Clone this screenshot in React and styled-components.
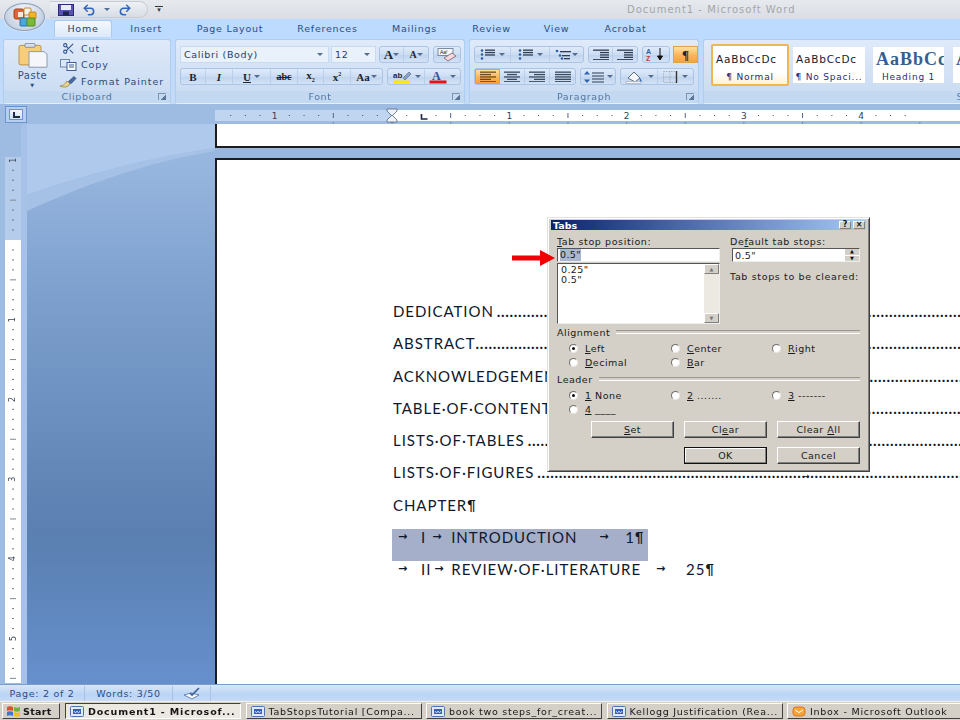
import React from 'react'
import styled, { createGlobalStyle } from 'styled-components'
import { Scissors, Undo2, Redo2 } from 'lucide-react'

const GlobalStyle = createGlobalStyle`
  html, body { margin: 0; padding: 0; background: #fff; overflow: hidden; }
  * { box-sizing: border-box; }
`

const uiFont = `"DejaVu Sans", "Liberation Sans", sans-serif`

const App_ = styled.div`
  position: relative;
  width: 960px;
  height: 720px;
  overflow: hidden;
  display: flex;
  flex-direction: column;
  font-family: ${uiFont};
  filter: blur(0.35px);
`

/* title bar */
const TitleBar = styled.div`
  height: 19px;
  flex: none;
  display: flex;
  align-items: center;
  background: linear-gradient(#e6e9ee, #dadee4);
`
const QuickAccess = styled.div`
  width: 98px;
  height: 17px;
  margin-left: 50px;
  padding-left: 8px;
  display: flex;
  align-items: center;
  gap: 8px;
  border-radius: 0 9px 9px 0;
  border: 1px solid #c6ccd6;
  border-left: 0;
  background: linear-gradient(#eef1f5, #d8dde5);
`
const QuickCaret = styled.div`
  margin-left: 7px;
  width: 8px;
  color: #334;
  font-size: 7px;
  line-height: 7px;
  text-align: center;
  border-top: 1px solid #334;
`
const WindowTitle = styled.div`
  margin-left: 464px;
  font-size: 10px;
  letter-spacing: 1px;
  color: #a3a6aa;
  white-space: nowrap;
`

/* tabs */
const TabRow = styled.div`
  height: 18px;
  flex: none;
  display: flex;
  align-items: flex-end;
  padding-left: 54px;
  background: #bddaff;
`
const RibbonTab = styled.div`
  width: ${(p) => p.$w}px;
  height: ${(p) => (p.$active ? 17 : 16)}px;
  line-height: 16px;
  text-align: center;
  font-size: 9.5px;
  letter-spacing: 0.75px;
  color: #2c4f85;
  white-space: nowrap;
  flex: none;
  ${(p) => p.$active && `
    background: linear-gradient(#f2f8ff, #dce9f9);
    border: 1px solid #a9c9ee;
    border-bottom: 0;
    border-radius: 3px 3px 0 0;
    color: #23416f;
  `}
`

/* office orb */
const Orb = styled.div`
  position: absolute;
  left: 4px;
  top: 3px;
  width: 41px;
  height: 28px;
  border-radius: 50%;
  display: flex;
  align-items: center;
  justify-content: center;
  background: radial-gradient(circle at 50% 30%, #f7f8fa 0, #c7d3e3 70%, #97a8bf 100%);
  border: 1px solid #8fa0b8;
  box-shadow: 0 0 0 1px #dbe6f5;
`

/* ribbon */
const Ribbon = styled.div`
  height: 67px;
  flex: none;
  display: flex;
  gap: 4px;
  padding: 2px 0 0 3px;
  background: linear-gradient(#bddaff, #c4dbf7);
  overflow: hidden;
`
const Group = styled.div`
  width: ${(p) => p.$w}px;
  flex: none;
  display: flex;
  flex-direction: column;
  border: 1px solid #afcdee;
  border-bottom-color: #e4effc;
  border-radius: 3px;
  background: linear-gradient(#dfeafa 0, #d5e3f6 40%, #c7daf2 100%);
`
const GroupBody = styled.div`
  flex: 1;
  min-height: 0;
`
const FontBody = styled(GroupBody)`
  display: flex;
  flex-direction: column;
  gap: 5px;
  padding: 6px 0 0 4px;
`
const ClipBody = styled(GroupBody)`
  display: flex;
  padding: 2px 0 0 6px;
`
const GalleryBody = styled(GroupBody)`
  display: flex;
  align-items: flex-start;
  padding: 4px 0 0 7px;
`
const GroupLabel = styled.div`
  position: relative;
  height: 12px;
  flex: none;
  text-align: center;
  font-size: 9.5px;
  line-height: 11px;
  letter-spacing: 0.6px;
  color: #5577a5;
  background: #c2d9f1;
`
const Launcher = styled.span`
  position: absolute;
  right: 4px;
  top: 2px;
  width: 8px;
  height: 7px;
  border: 1px solid #7d93b0;
  border-width: 1px 0 0 1px;
  background: linear-gradient(135deg, transparent 55%, #5d7696 55%);
`
const PasteColumn = styled.div`
  width: 45px;
  padding-top: 1px;
  display: flex;
  flex-direction: column;
  align-items: center;
  font-size: 10px;
  letter-spacing: 0.5px;
  color: #2f4f85;
  margin-right: 4px;
`
const PasteLabel = styled.div`
  margin-top: 1px;
  line-height: 13px;
`
const PasteCaret = styled.div`
  font-size: 5px;
  line-height: 7px;
  color: #334e78;
`
const ClipList = styled.div`
  display: flex;
  flex-direction: column;
  margin-top: -2px;
`
const ClipItem = styled.div`
  height: 16.5px;
  flex: none;
  display: flex;
  align-items: center;
  gap: 4px;
  font-size: 9.5px;
  letter-spacing: 0.95px;
  color: #2c4a7c;
  white-space: nowrap;
`
const ClipIcon = styled.span`
  width: 18px;
  display: flex;
  justify-content: center;
`
const Row = styled.div`
  height: 17px;
  flex: none;
  display: flex;
  gap: ${(p) => p.$gap ?? 4}px;
`
const Combo = styled.div`
  width: ${(p) => p.$w}px;
  height: 17px;
  margin-right: ${(p) => p.$mr ?? 0}px;
  display: flex;
  align-items: center;
  justify-content: space-between;
  padding: 0 5px 0 3px;
  background: #e9f1fb;
  border: 1px solid #c6daf1;
  font-size: 9.5px;
  letter-spacing: 0.65px;
  color: #2a3f60;
  white-space: nowrap;
`
const Caret = styled.span`
  width: 0;
  height: 0;
  border-left: 3px solid transparent;
  border-right: 3px solid transparent;
  border-top: 3px solid #536d92;
  flex: none;
`
const BtnGroup = styled.div`
  display: flex;
  height: 17px;
  border: 1px solid #a8c4e6;
  border-radius: 3px;
  background: linear-gradient(#e0ebfa, #cbdcf3 50%, #c0d4ee 55%, #d4e2f5);
`
const Btn = styled.div`
  width: ${(p) => p.$w}px;
  display: flex;
  align-items: center;
  justify-content: center;
  gap: ${(p) => p.$gap ?? 3}px;
  border-right: ${(p) => (p.$last ? 0 : '1px solid rgba(170,195,228,0.6)')};
  font-family: "Liberation Serif", serif;
  font-size: 11px;
  color: #1c2430;
  white-space: nowrap;
  ${(p) => p.$on && `
    background: linear-gradient(#fde3a0, #f9b55b 55%, #f6a33e);
    border: 1px solid #d9a44a;
  `}
`
const PilcrowBtn = styled(Btn)`
  height: 17px;
  margin-left: -1px;
`
const BtnText = styled.span`
  font-weight: ${(p) => p.$w ?? 700};
  font-size: ${(p) => p.$s ?? 11}px;
  font-style: ${(p) => (p.$i ? 'italic' : 'normal')};
  text-decoration: ${(p) => p.$d ?? 'none'};
`
const TinyScript = styled.span`
  font-size: 6px;
  vertical-align: ${(p) => (p.$up ? 'super' : 'sub')};
`
const StyleCard = styled.div`
  width: ${(p) => p.$w}px;
  height: ${(p) => (p.$on ? 42 : 36)}px;
  margin-right: ${(p) => p.$mr}px;
  margin-top: ${(p) => (p.$on ? 0 : 3)}px;
  padding-top: 2px;
  flex: none;
  overflow: hidden;
  text-align: center;
  background: #fff;
  ${(p) => p.$on && `
    border: 2px solid #f2b64f;
    border-radius: 2px;
    background: linear-gradient(#fff 70%, #fff3d2);
    padding-top: 3px;
  `}
`
const StylePreview = styled.div`
  height: 21px;
  line-height: 21px;
  padding: 0 3px;
  overflow: hidden;
  white-space: nowrap;
  text-align: left;
  font-family: ${(p) => (p.$head ? '"Liberation Serif", serif' : uiFont)};
  font-weight: ${(p) => (p.$head ? 700 : 400)};
  font-size: ${(p) => (p.$head ? 18 : 10.5)}px;
  letter-spacing: ${(p) => (p.$head ? 1 : 0.8)}px;
  color: ${(p) => (p.$head ? '#365f91' : '#111c33')};
`
const StyleName = styled.div`
  font-size: 9px;
  line-height: 14px;
  letter-spacing: 0.8px;
  color: #2b2a7f;
  white-space: nowrap;
`

/* ruler row */
const RulerRow = styled.div`
  height: 20px;
  flex: none;
  display: flex;
  background: #9ebce2;
`
const TabSelector = styled.div`
  width: 22px;
  height: 17px;
  margin: 2px 0 0 5px;
  display: flex;
  align-items: center;
  justify-content: center;
  background: #b7cfee;
  border: 1px solid #6d93d4;
`
const TabMark = styled.div`
  width: 14px;
  height: 11px;
  display: flex;
  align-items: center;
  justify-content: center;
  background: linear-gradient(#f1f6fd, #d2e1f5);
  border: 1px solid #6d93d4;
  &::after {
    content: '';
    width: 5px;
    height: 4px;
    border-left: 2px solid #1c2a44;
    border-bottom: 2px solid #1c2a44;
  }
`
const HRuler = styled.svg`
  margin-left: 188px;
  flex: none;
  display: block;
`

/* workspace */
const Workspace = styled.div`
  height: 560px;
  flex: none;
  display: flex;
`
const SideStrip = styled.div`
  width: 27px;
  flex: none;
  padding: 33px 0 0 5px;
  background: linear-gradient(90deg, #9ebce2 21px, #a6c2e8 21px);
`
const Canvas = styled.div`
  position: relative;
  flex: 1;
  min-width: 0;
  padding-left: 188px;
  background: linear-gradient(#9dbbe2 0, #97b6df 40px, #7c9fcd 176px, #5a7fb0 410px, #6690cd 560px);
`
const Swoosh = styled.svg`
  position: absolute;
  left: 0;
  top: 0;
`
const TopPage = styled.div`
  position: relative;
  height: 24px;
  margin-bottom: 10px;
  background: #fff;
  border-left: 2px solid #1c1c1c;
  border-bottom: 2px solid #1c1c1c;
`
const Page = styled.div`
  position: relative;
  height: 526px;
  overflow: hidden;
  padding: 143px 0 0 175px;
  background: #fff;
  border-left: 2px solid #1c1c1c;
  border-top: 2px solid #1c1c1c;
  font-family: Lato, "Open Sans", sans-serif;
  font-size: 15px;
  color: #10182b;
  letter-spacing: 0.95px;
`
const Line = styled.div`
  position: relative;
  height: 32.3px;
  padding-left: 1px;
  line-height: 16px;
  display: flex;
  white-space: nowrap;
`
const SelectedLine = styled(Line)`
  width: 256px;
  background: #a6afca;
`
const Leader = styled.span`
  flex: 1;
  min-width: 0;
  overflow: hidden;
  margin-left: ${(p) => p.$ml ?? 0}px;
  letter-spacing: 0.7px;
  font-weight: 700;
`
const TabGap = styled.span`
  display: inline-block;
  width: ${(p) => p.$w}px;
  padding-left: ${(p) => p.$pl ?? 0}px;
  flex: none;
  font-family: "DejaVu Sans", sans-serif;
  font-size: 11px;
  font-weight: 700;
  letter-spacing: 0;
`
const StrayArrow = styled.span`
  position: absolute;
  left: 410px;
  top: 4px;
  font-family: "DejaVu Sans", sans-serif;
  font-size: 9px;
  letter-spacing: 0;
`
const Mark = styled.span`
  letter-spacing: 0;
  font-weight: 700;
  font-family: "Liberation Sans", sans-serif;
`

/* tabs dialog */
const Dialog = styled.div`
  position: absolute;
  left: 547px;
  top: 217px;
  width: 323px;
  height: 255px;
  padding: 2px 3px 3px;
  background: #d4d0c8;
  border: 1px solid #404040;
  border-top-color: #e4e2dc;
  border-left-color: #e4e2dc;
  box-shadow: inset 1px 1px 0 #fff, inset -1px -1px 0 #808080;
  font-size: 9.5px;
  color: #1a1a1a;
`
const DialogTitle = styled.div`
  height: 10px;
  display: flex;
  align-items: center;
  justify-content: space-between;
  padding: 0 1px 0 2px;
  background: linear-gradient(90deg, #0a246a, #a6caf0);
  color: #fff;
  font-weight: 700;
  font-size: 9.5px;
`
const TitleBtns = styled.div`
  display: flex;
  gap: 2px;
`
const TitleBtn = styled.span`
  width: 12px;
  height: 8px;
  background: #d4d0c8;
  border: 1px solid #808080;
  border-top-color: #fff;
  border-left-color: #fff;
  color: #111;
  font-size: 8px;
  line-height: 6px;
  font-weight: 700;
  text-align: center;
`
const DialogBody = styled.div`
  padding: 6px 6px 0 6px;
`
const TopGrid = styled.div`
  display: grid;
  grid-template-columns: 163px 130px;
  column-gap: 10px;
`
const Field = styled.div`
  display: flex;
  flex-direction: column;
`
const FieldLabel = styled.div`
  height: 12px;
  line-height: 11px;
  letter-spacing: 0.6px;
  white-space: nowrap;
  margin-left: ${(p) => p.$ml ?? 0}px;
`
const SunkenInput = styled.div`
  height: 14px;
  display: flex;
  align-items: center;
  justify-content: space-between;
  margin-left: ${(p) => p.$ml ?? 0}px;
  padding-left: 2px;
  background: #fff;
  border: 1px solid #555;
  border-right-color: #eee;
  border-bottom-color: #eee;
  letter-spacing: 0.4px;
`
const InputSel = styled.span`
  background: #a9b7d1;
  line-height: 12px;
`
const Spinner = styled.div`
  width: 14px;
  height: 12px;
  display: flex;
  flex-direction: column;
  gap: 1px;
  background: #fff;
`
const SpinBtn = styled.span`
  flex: 1;
  background: #d4d0c8;
  color: #111;
  font-size: 5px;
  line-height: 5px;
  text-align: center;
`
const ListBox = styled.div`
  position: relative;
  height: 61px;
  margin-top: 1px;
  padding: 1px 0 0 3px;
  background: #fff;
  border: 1px solid #555;
  border-right-color: #eee;
  border-bottom-color: #eee;
  line-height: 10px;
  letter-spacing: 0.4px;
`
const ScrollTrack = styled.div`
  position: absolute;
  right: 0;
  top: 0;
  bottom: 0;
  width: 15px;
  display: flex;
  flex-direction: column;
  justify-content: space-between;
  background: #ece9e2;
`
const ScrollBtn = styled.span`
  height: 10px;
  background: #d4d0c8;
  border: 1px solid #808080;
  border-top-color: #fff;
  border-left-color: #fff;
  color: #777;
  font-size: 5px;
  line-height: 8px;
  text-align: center;
`
const ClearNote = styled.div`
  margin-top: 9px;
  line-height: 12px;
  letter-spacing: 0.65px;
  white-space: nowrap;
`
const Legend = styled.div`
  height: 12px;
  margin-top: ${(p) => p.$mt}px;
  display: flex;
  align-items: center;
  gap: 6px;
  letter-spacing: 0.5px;
  &::after {
    content: '';
    flex: 1;
    height: 2px;
    border-top: 1px solid #9a978f;
    border-bottom: 1px solid #fff;
  }
`
const RadioGrid = styled.div`
  display: grid;
  grid-template-columns: 102px 101px 1fr;
  grid-auto-rows: 14.5px;
  padding: ${(p) => p.$pt}px 0 0 12px;
`
const RadioItem = styled.div`
  display: flex;
  align-items: center;
  gap: 7px;
  letter-spacing: 0.5px;
  white-space: nowrap;
`
const RadioDot = styled.span`
  width: 9px;
  height: 9px;
  flex: none;
  display: flex;
  align-items: center;
  justify-content: center;
  border-radius: 50%;
  background: #fff;
  border: 1px solid #6f6d68;
  border-right-color: #e8e6e0;
  border-bottom-color: #e8e6e0;
  &::after {
    content: '';
    width: 3px;
    height: 3px;
    border-radius: 50%;
    background: ${(p) => (p.$on ? '#111' : 'transparent')};
  }
`
const ButtonRow = styled.div`
  display: flex;
  justify-content: flex-end;
  gap: 10px;
  margin-top: ${(p) => p.$mt}px;
`
const DlgButton = styled.div`
  width: 83px;
  height: 17px;
  line-height: 15px;
  text-align: center;
  background: #d4d0c8;
  letter-spacing: 0.5px;
  border: 1px solid #404040;
  border-top-color: #fff;
  border-left-color: #fff;
  box-shadow: inset -1px -1px 0 #808080;
  ${(p) => p.$def && `
    border: 1px solid #111;
    box-shadow: inset -1px -1px 0 #808080, inset 1px 1px 0 #fff;
  `}
`
const RedArrow = styled.svg`
  position: absolute;
  left: 512px;
  top: 249px;
`

/* status bar */
const StatusBar = styled.div`
  height: 17px;
  flex: none;
  display: flex;
  align-items: center;
  border-top: 1px solid #7b9ec9;
  background: linear-gradient(#d8e6f8, #bad4f6 60%, #c6dbf6);
  font-size: 9.5px;
  letter-spacing: 0.7px;
  color: #2f4d7f;
`
const StatusCell = styled.div`
  width: ${(p) => p.$w}px;
  height: 15px;
  display: flex;
  align-items: center;
  justify-content: center;
  border-right: 1px solid #a9c3e4;
  white-space: nowrap;
`

/* taskbar */
const Taskbar = styled.div`
  height: 19px;
  flex: none;
  display: flex;
  align-items: center;
  gap: 4.5px;
  padding: 0 0 0 2px;
  background: #d4d0c8;
  border-top: 1px solid #f2f0ea;
  font-size: 9.5px;
  letter-spacing: 0.75px;
  color: #161616;
`
const StartBtn = styled.div`
  width: 58px;
  height: 16px;
  flex: none;
  margin-right: 0.5px;
  display: flex;
  align-items: center;
  gap: 2px;
  padding-left: 3px;
  font-weight: 700;
  letter-spacing: 0.3px;
  border: 1px solid #404040;
  border-top-color: #fff;
  border-left-color: #fff;
`
const TaskBtn = styled.div`
  width: 176px;
  height: 16px;
  flex: none;
  display: flex;
  align-items: center;
  gap: 4px;
  padding-left: 4px;
  overflow: hidden;
  white-space: nowrap;
  border: 1px solid #404040;
  border-top-color: #fff;
  border-left-color: #fff;
  ${(p) => p.$active && `
    font-weight: 700;
    letter-spacing: 0.85px;
    background: #ece9e3;
    border: 1px solid #fff;
    border-top-color: #404040;
    border-left-color: #404040;
  `}
`

/* drawings */
const OfficeLogo = () => (
  <svg width="26" height="22" viewBox="0 0 26 22">
    <rect x="2" y="3" width="10" height="10" rx="2" fill="#e8622a" stroke="#b03e12" />
    <rect x="12" y="2" width="7" height="7" rx="1" fill="#f4f4ef" stroke="#c6842c" />
    <rect x="17" y="6" width="7" height="7" rx="1" fill="#f0b429" stroke="#c6842c" />
    <rect x="8" y="12" width="8" height="8" rx="1" fill="#4aa6dc" stroke="#2370a8" />
    <rect x="15" y="12" width="8" height="8" rx="1" fill="#7cb740" stroke="#4f8a20" />
    <rect x="6" y="6" width="5" height="5" fill="#fff" opacity="0.85" />
  </svg>
)
const SaveIcon = () => (
  <svg width="16" height="12" viewBox="0 0 16 12">
    <rect x="0.5" y="0.5" width="15" height="11" fill="#5b53b3" stroke="#2c2a78" />
    <rect x="3" y="1" width="10" height="5" fill="#e8ecf6" />
    <rect x="5" y="7.500" width="6" height="4" fill="#1f2458" />
  </svg>
)
const PasteIcon = () => (
  <svg width="30" height="25" viewBox="0 0 30 32" preserveAspectRatio="none">
    <rect x="1" y="3" width="22" height="25" rx="2" fill="#f5cd7c" stroke="#b88a3c" />
    <rect x="7" y="0.5" width="10" height="5" rx="1" fill="#d9dfe8" stroke="#7e8ba0" />
    <path d="M11 11h15l3 3v17H11z" fill="#f4f6f9" stroke="#8692a6" />
  </svg>
)
const CopyIcon = () => (
  <svg width="17" height="12" viewBox="0 0 17 12">
    <rect x="0.5" y="0.5" width="9" height="7.500" fill="#dde8f6" stroke="#6d88ad" />
    <rect x="7" y="3.500" width="9" height="8" fill="#f6f9fd" stroke="#3d5f95" />
    <path d="M9 6h5M9 8h5" stroke="#3d5f95" />
  </svg>
)
const BrushIcon = () => (
  <svg width="18" height="13" viewBox="0 0 18 13">
    <path d="M1 11c3 0 5-2 7-5l3 3c-2 3-6 4-10 2z" fill="#ecd58c" stroke="#8f7a35" strokeWidth="0.7" />
    <path d="M9.500 6.500 15 1.500l2 2-5 5.200z" fill="#4a6aa3" stroke="#2d4674" strokeWidth="0.7" />
  </svg>
)
const Lines = ({ rows, color = '#3a4a5e', w = 16, h = 11, dots }) => (
  <svg width={w} height={h} viewBox={`0 0 ${w} ${h}`}>
    {rows.map((r, i) => (
      <rect key={i} x={r[0]} y={r[2] ?? i * 2.4 + 0.5} width={r[1]} height="1.3" fill={color} />
    ))}
    {dots && dots.map((d, i) => <circle key={i} cx={d[0]} cy={d[1]} r="1.3" fill={d[2] ?? '#2e5fa8'} />)}
  </svg>
)
const SortIcon = () => (
  <svg width="20" height="13" viewBox="0 0 20 13">
    <text x="0" y="6" fontSize="7" fontWeight="700" fill="#2f5ea5" fontFamily="Liberation Sans">A</text>
    <text x="0" y="13" fontSize="7" fontWeight="700" fill="#c0392b" fontFamily="Liberation Sans">Z</text>
    <path d="M14 0v10M11.500 8l2.500 4 2.500-4z" stroke="#111" fill="#111" strokeWidth="1" />
  </svg>
)
const ClearIcon = () => (
  <svg width="20" height="14" viewBox="0 0 20 14">
    <rect x="1" y="0.5" width="15" height="7" fill="#f4f6fa" stroke="#7a8aa3" />
    <text x="3" y="6" fontSize="5" fontFamily="Liberation Sans" fill="#222">Aa!</text>
    <path d="M7 10 15 5l4 3-8 5z" fill="#f4d7df" stroke="#8d7480" />
  </svg>
)
const HighlightIcon = () => (
  <svg width="20" height="14" viewBox="0 0 20 14">
    <text x="1" y="8" fontSize="8" fontWeight="700" fontFamily="Liberation Sans" fill="#1c2a44">ab</text>
    <path d="M11 8l6-6 2 2-6 6z" fill="#8da3c2" stroke="#4c5f7e" strokeWidth="0.6" />
    <rect x="1" y="10.500" width="17" height="3" fill="#ffe800" />
  </svg>
)
const ColorIcon = () => (
  <svg width="18" height="14" viewBox="0 0 18 14">
    <text x="3" y="10" fontSize="12" fontWeight="700" fontFamily="Liberation Serif" fill="#2c4f95">A</text>
    <rect x="0.5" y="10.500" width="17" height="3" fill="#e8101c" />
  </svg>
)
const ShadeIcon = () => (
  <svg width="20" height="14" viewBox="0 0 20 14">
    <path d="M3 8 9 2l6 6-5 4z" fill="#f5f7fa" stroke="#5b6a82" />
    <path d="M15 8c2 2 2 4 1 4s-2-2-1-4z" fill="#2e6cc2" />
    <rect x="1" y="11.500" width="15" height="2" fill="#f3f3f3" stroke="#8b97aa" strokeWidth="0.5" />
  </svg>
)
const BorderIcon = () => (
  <svg width="16" height="12" viewBox="0 0 16 12">
    <rect x="0.5" y="0.5" width="13" height="11" fill="none" stroke="#a7b2c2" strokeDasharray="1.5 1" />
    <path d="M7 0v12M0 6h14" stroke="#a7b2c2" strokeDasharray="1.5 1" />
    <path d="M13.500 0v12" stroke="#333" strokeWidth="1.4" />
  </svg>
)
const LineSpacingIcon = () => (
  <svg width="22" height="12" viewBox="0 0 22 12">
    <path d="M3 0l3 3.500H0zM3 12l3-3.500H0z" fill="#2e62ad" />
    <path d="M8 2h12M8 5h12M8 8h12M8 11h12" stroke="#2f3c52" />
  </svg>
)
const Flag = () => (
  <svg width="15" height="12" viewBox="0 0 15 12">
    <path d="M1 2c2-1 4-1 6 0v4C5 5 3 5 1 6z" fill="#e0512a" />
    <path d="M8 2c2 1 4 1 6 0v4c-2 1-4 1-6 0z" fill="#6eb33f" />
    <path d="M1 7c2-1 4-1 6 0v4c-2-1-4-1-6 0z" fill="#3c79d6" />
    <path d="M8 7c2 1 4 1 6 0v4c-2 1-4 1-6 0z" fill="#f2c11f" />
  </svg>
)
const DocIcon = () => (
  <svg width="14" height="11" viewBox="0 0 14 11">
    <rect x="0.5" y="0.5" width="13" height="10" rx="1" fill="#dfe9f8" stroke="#4b74b5" />
    <rect x="3" y="3" width="8" height="5" fill="#2f63b5" />
    <path d="M4 5l1.500 2L7 5l1.500 2L10 5" stroke="#fff" strokeWidth="0.7" fill="none" />
  </svg>
)
const OutlookIcon = () => (
  <svg width="14" height="11" viewBox="0 0 14 11">
    <rect x="1" y="1" width="12" height="9" rx="3" fill="#f4a63a" stroke="#e2731d" />
    <path d="M3 4l4 2.500L11 4" stroke="#fff" strokeWidth="1" fill="none" />
  </svg>
)
const ProofIcon = () => (
  <svg width="18" height="13" viewBox="0 0 18 13">
    <path d="M1 8l7-2 8 2-7 4z" fill="#f5f8fd" stroke="#4e6d9e" strokeWidth="0.8" />
    <path d="M7 6l2 2 7-7" stroke="#3b5f96" strokeWidth="1.6" fill="none" />
  </svg>
)

const ticks = (n, fn) => Array.from({ length: n }, (_, i) => fn(i))

const HorizontalRuler = () => {
  const unit = 117.3
  const zero = 177
  return (
    <HRuler width="745" height="20" viewBox="0 0 745 20">
      <rect x="0" y="6" width="177" height="11" fill="#c0d5f0" />
      <rect x="177" y="6" width="568" height="11" fill="#fff" />
      {ticks(48, (i) => {
        const x = zero + (i - 12) * (unit / 8)
        if (x < 2) return null
        const k = i - 12
        if (k % 8 === 0) {
          if (k === 0) return null
          return (
            <text key={i} x={x} y="14.5" fontSize="9" fill="#33415c" textAnchor="middle" fontFamily="DejaVu Sans">
              {Math.abs(k / 8)}
            </text>
          )
        }
        return k % 4 === 0
          ? <rect key={i} x={x - 0.5} y="9" width="1" height="5" fill="#55657f" />
          : <rect key={i} x={x - 0.5} y="11" width="1" height="1" fill="#3c4a63" />
      })}
      {ticks(11, (i) => (
        <rect key={i} x={zero + (i - 1) * (unit / 2) - 0.5} y="18" width="1" height="2" fill="#6d88ad" />
      ))}
      <path d="M172 5h10v2l-5 5-5-5z M172 18v-2l5-5 5 5v2z" fill="#eef3fa" stroke="#55657f" strokeWidth="0.8" />
      <path d="M206.500 10v5h6" stroke="#1c2a44" strokeWidth="1.6" fill="none" />
    </HRuler>
  )
}

const VerticalRuler = () => {
  const eighth = 79.7 / 8
  const zero = 83
  return (
    <svg width="16" height="526" viewBox="0 0 16 526" style={{ display: 'block' }}>
      <rect x="0" y="0" width="16" height="83" fill="#b5cdeb" />
      <rect x="0" y="83" width="16" height="443" fill="#fff" />
      {ticks(54, (i) => {
        const k = i - 8
        const y = zero + k * eighth
        if (y < 2) return null
        if (k % 8 === 0) {
          if (k === 0) return null
          const n = Math.abs(k / 8)
          return (
            <text key={i} x="8" y={y} fontSize="8" fill="#3b4658" textAnchor="middle" dominantBaseline="central"
              fontFamily="DejaVu Sans" transform={`rotate(-90 8 ${y})`}>{n}</text>
          )
        }
        return k % 4 === 0
          ? <rect key={i} x="5" y={y - 0.5} width="6" height="1" fill="#7d8798" />
          : <rect key={i} x="7" y={y - 0.5} width="2" height="1" fill="#6a7588" />
      })}
    </svg>
  )
}

const dots = '.'.repeat(260)

export default function App() {
  return (
    <App_>
      <GlobalStyle />
      <TitleBar>
        <QuickAccess>
          <SaveIcon />
          <Undo2 size={14} color="#3366b8" strokeWidth={2.6} />
          <Caret />
          <Redo2 size={14} color="#3366b8" strokeWidth={2.6} />
        </QuickAccess>
        <QuickCaret>▾</QuickCaret>
        <WindowTitle>Document1 - Microsoft Word</WindowTitle>
      </TitleBar>

      <TabRow>
        <RibbonTab $w={58} $active>Home</RibbonTab>
        <RibbonTab $w={68}>Insert</RibbonTab>
        <RibbonTab $w={100}>Page Layout</RibbonTab>
        <RibbonTab $w={95}>References</RibbonTab>
        <RibbonTab $w={79}>Mailings</RibbonTab>
        <RibbonTab $w={75}>Review</RibbonTab>
        <RibbonTab $w={55}>View</RibbonTab>
        <RibbonTab $w={83}>Acrobat</RibbonTab>
      </TabRow>

      <Orb><OfficeLogo /></Orb>

      <Ribbon>
        <Group $w={168}>
          <ClipBody>
            <PasteColumn>
              <PasteIcon />
              <PasteLabel>Paste</PasteLabel>
              <PasteCaret>▼</PasteCaret>
            </PasteColumn>
            <ClipList>
              <ClipItem><ClipIcon><Scissors size={13} color="#2f5590" strokeWidth={2} /></ClipIcon>Cut</ClipItem>
              <ClipItem><ClipIcon><CopyIcon /></ClipIcon>Copy</ClipItem>
              <ClipItem><ClipIcon><BrushIcon /></ClipIcon>Format Painter</ClipItem>
            </ClipList>
          </ClipBody>
          <GroupLabel>Clipboard<Launcher /></GroupLabel>
        </Group>

        <Group $w={290}>
          <FontBody>
            <Row>
              <Combo $w={149} $mr={-2}>Calibri (Body)<Caret /></Combo>
              <Combo $w={45} $mr={-1}>12<Caret /></Combo>
              <BtnGroup>
                <Btn $w={24} $gap={0}><BtnText $s={13}>A</BtnText><Caret /></Btn>
                <Btn $w={24} $gap={0} $last><BtnText $s={10}>A</BtnText><Caret /></Btn>
              </BtnGroup>
              <BtnGroup><Btn $w={26} $last><ClearIcon /></Btn></BtnGroup>
            </Row>
            <Row $gap={4}>
              <BtnGroup>
                <Btn $w={25}><BtnText>B</BtnText></Btn>
                <Btn $w={27}><BtnText $i>I</BtnText></Btn>
                <Btn $w={38}><BtnText $d="underline">U</BtnText><Caret /></Btn>
                <Btn $w={27}><BtnText $s={10} $d="line-through">abc</BtnText></Btn>
                <Btn $w={26}><BtnText>x<TinyScript>2</TinyScript></BtnText></Btn>
                <Btn $w={27}><BtnText>x<TinyScript $up>2</TinyScript></BtnText></Btn>
                <Btn $w={31} $gap={1} $last><BtnText>Aa</BtnText><Caret /></Btn>
              </BtnGroup>
              <BtnGroup>
                <Btn $w={37}><HighlightIcon /><Caret /></Btn>
                <Btn $w={35} $last><ColorIcon /><Caret /></Btn>
              </BtnGroup>
            </Row>
          </FontBody>
          <GroupLabel>Font<Launcher /></GroupLabel>
        </Group>

        <Group $w={230}>
          <FontBody>
            <Row>
              <BtnGroup>
                <Btn $w={36}><Lines rows={[[5, 10], [5, 10], [5, 10]]} color="#2f3c52" dots={[[2, 1.5], [2, 5.5], [2, 9.5]]} /><Caret /></Btn>
                <Btn $w={39}><Lines rows={[[5, 10], [5, 10], [5, 10]]} color="#2f3c52" dots={[[2, 1.5], [2, 5.5], [2, 9.5]]} /><Caret /></Btn>
                <Btn $w={33} $gap={1} $last><Lines rows={[[5, 11, 2], [7, 8, 6], [9, 6, 9]]} color="#2f3c52" dots={[[2, 2], [5, 6.5], [7, 9.5]]} /><Caret /></Btn>
              </BtnGroup>
              <BtnGroup>
                <Btn $w={24}><Lines rows={[[0, 16], [7, 9], [7, 9], [7, 9], [0, 16]]} color="#2f3c52" /></Btn>
                <Btn $w={24} $last><Lines rows={[[0, 16], [7, 9], [7, 9], [7, 9], [0, 16]]} color="#2f3c52" /></Btn>
              </BtnGroup>
              <BtnGroup><Btn $w={26} $last><SortIcon /></Btn></BtnGroup>
              <PilcrowBtn $w={26} $last $on><BtnText $s={13}>¶</BtnText></PilcrowBtn>
            </Row>
            <Row>
              <BtnGroup>
                <Btn $w={25} $on><Lines rows={[[0, 16], [0, 11], [0, 16], [0, 11], [0, 16]]} color="#6b4a1c" /></Btn>
                <Btn $w={25}><Lines rows={[[0, 16], [3, 10], [0, 16], [3, 10], [0, 16]]} /></Btn>
                <Btn $w={25}><Lines rows={[[0, 16], [5, 11], [0, 16], [5, 11], [0, 16]]} /></Btn>
                <Btn $w={25} $last><Lines rows={[[0, 16], [0, 16], [0, 16], [0, 16], [0, 16]]} /></Btn>
              </BtnGroup>
              <BtnGroup>
                <Btn $w={34} $gap={1} $last><LineSpacingIcon /><Caret /></Btn>
              </BtnGroup>
              <BtnGroup>
                <Btn $w={37}><ShadeIcon /><Caret /></Btn>
                <Btn $w={35} $last><BorderIcon /><Caret /></Btn>
              </BtnGroup>
            </Row>
          </FontBody>
          <GroupLabel>Paragraph<Launcher /></GroupLabel>
        </Group>

        <Group $w={540}>
          <GalleryBody>
            <StyleCard $w={78} $on $mr={4}>
              <StylePreview>AaBbCcDc</StylePreview>
              <StyleName>¶ Normal</StyleName>
            </StyleCard>
            <StyleCard $w={72} $mr={8}>
              <StylePreview>AaBbCcDc</StylePreview>
              <StyleName>¶ No Spaci...</StyleName>
            </StyleCard>
            <StyleCard $w={71} $mr={9}>
              <StylePreview $head>AaBbCc</StylePreview>
              <StyleName>Heading 1</StyleName>
            </StyleCard>
            <StyleCard $w={40} $mr={0}>
              <StylePreview $head>A</StylePreview>
            </StyleCard>
          </GalleryBody>
          <GroupLabel>Styles</GroupLabel>
        </Group>
      </Ribbon>

      <RulerRow>
        <TabSelector><TabMark /></TabSelector>
        <HorizontalRuler />
      </RulerRow>

      <Workspace>
        <SideStrip><VerticalRuler /></SideStrip>
        <Canvas>
          <Swoosh width="188" height="100" viewBox="0 0 188 100">
            <path d="M0 0H188V24C120 34 60 50 0 71z" fill="#aec9ec" />
            <path d="M0 71C60 50 120 34 188 24V27C120 38 60 60 0 87z" fill="#a6c1e6" />
          </Swoosh>
          <TopPage />
          <Page>
            <Line>DEDICATION <Leader $ml={3}>{dots}</Leader></Line>
            <Line>ABSTRACT<Leader>{dots}</Leader></Line>
            <Line>ACKNOWLEDGEMENTS<Leader>{dots}</Leader></Line>
            <Line>TABLE·OF·CONTENTS<Leader>{dots}</Leader></Line>
            <Line>LISTS·OF·TABLES <Leader $ml={3}>{dots}</Leader></Line>
            <Line>LISTS·OF·FIGURES <Leader $ml={3}>{dots}</Leader><StrayArrow>→</StrayArrow></Line>
            <Line>CHAPTER<Mark>¶</Mark></Line>
            <SelectedLine>
              <TabGap $w={28} $pl={5}>→</TabGap>I<TabGap $w={25} $pl={6}>→</TabGap>INTRODUCTION<TabGap $w={48} $pl={22}>→</TabGap>1<Mark>¶</Mark>
            </SelectedLine>
            <Line>
              <TabGap $w={28} $pl={5}>→</TabGap>II<TabGap $w={20} $pl={3}>→</TabGap>REVIEW·OF·LITERATURE<TabGap $w={45} $pl={15}>→</TabGap>25<Mark>¶</Mark>
            </Line>
          </Page>
        </Canvas>
      </Workspace>

      <StatusBar>
        <StatusCell $w={85}>Page: 2 of 2</StatusCell>
        <StatusCell $w={88}>Words: 3/50</StatusCell>
        <StatusCell $w={38}><ProofIcon /></StatusCell>
      </StatusBar>

      <Taskbar>
        <StartBtn><Flag />Start</StartBtn>
        <TaskBtn $active><DocIcon />Document1 - Microsof...</TaskBtn>
        <TaskBtn><DocIcon />TabStopsTutorial [Compa...</TaskBtn>
        <TaskBtn><DocIcon />book two steps_for_creat...</TaskBtn>
        <TaskBtn><DocIcon />Kellogg Justification (Rea...</TaskBtn>
        <TaskBtn><OutlookIcon />Inbox - Microsoft Outlook</TaskBtn>
      </Taskbar>

      <Dialog>
        <DialogTitle>
          Tabs
          <TitleBtns><TitleBtn>?</TitleBtn><TitleBtn>×</TitleBtn></TitleBtns>
        </DialogTitle>
        <DialogBody>
          <TopGrid>
            <Field>
              <FieldLabel><u>T</u>ab stop position:</FieldLabel>
              <SunkenInput><InputSel>0.5"</InputSel></SunkenInput>
              <ListBox>
                0.25"<br />0.5"
                <ScrollTrack><ScrollBtn>▲</ScrollBtn><ScrollBtn>▼</ScrollBtn></ScrollTrack>
              </ListBox>
            </Field>
            <Field>
              <FieldLabel>De<u>f</u>ault tab stops:</FieldLabel>
              <SunkenInput $ml={2}>
                0.5"
                <Spinner><SpinBtn>▲</SpinBtn><SpinBtn>▼</SpinBtn></Spinner>
              </SunkenInput>
              <ClearNote>Tab stops to be cleared:</ClearNote>
            </Field>
          </TopGrid>
          <Legend $mt={2}>Alignment</Legend>
          <RadioGrid $pt={3}>
            <RadioItem><RadioDot $on /><span><u>L</u>eft</span></RadioItem>
            <RadioItem><RadioDot /><span><u>C</u>enter</span></RadioItem>
            <RadioItem><RadioDot /><span><u>R</u>ight</span></RadioItem>
            <RadioItem><RadioDot /><span><u>D</u>ecimal</span></RadioItem>
            <RadioItem><RadioDot /><span><u>B</u>ar</span></RadioItem>
          </RadioGrid>
          <Legend $mt={3}>Leader</Legend>
          <RadioGrid $pt={3}>
            <RadioItem><RadioDot $on /><span><u>1</u> None</span></RadioItem>
            <RadioItem><RadioDot /><span><u>2</u> .......</span></RadioItem>
            <RadioItem><RadioDot /><span><u>3</u> -------</span></RadioItem>
            <RadioItem><RadioDot /><span><u>4</u> ____</span></RadioItem>
          </RadioGrid>
          <ButtonRow $mt={4}>
            <DlgButton><u>S</u>et</DlgButton>
            <DlgButton>Cl<u>e</u>ar</DlgButton>
            <DlgButton>Clear <u>A</u>ll</DlgButton>
          </ButtonRow>
          <ButtonRow $mt={9}>
            <DlgButton $def>OK</DlgButton>
            <DlgButton>Cancel</DlgButton>
          </ButtonRow>
        </DialogBody>
      </Dialog>

      <RedArrow width="44" height="18" viewBox="0 0 44 18">
        <path d="M0 6.500h28V1l15 8-15 8v-5.500H0z" fill="#f00000" />
      </RedArrow>
    </App_>
  )
}
